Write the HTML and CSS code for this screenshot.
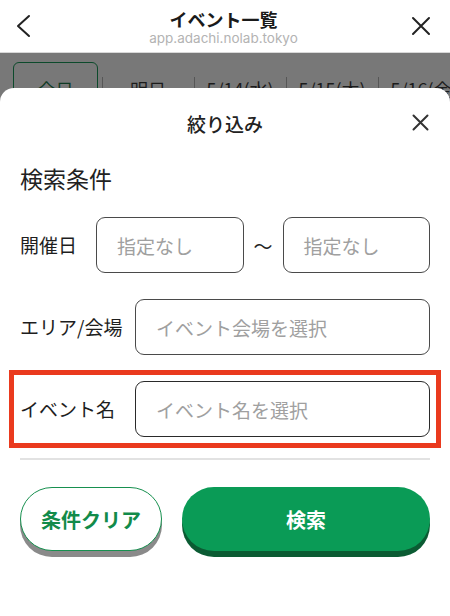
FILE: index.html
```html
<!DOCTYPE html>
<html lang="ja">
<head>
<meta charset="utf-8">
<title>イベント一覧</title>
<link rel="stylesheet" href="styles.css">
</head>
<body>
<div class="screen">
  <header class="appbar">
    <button class="icon-btn appbar__back" aria-label="戻る">
      <svg width="16" height="24" viewBox="0 0 16 24"><polyline points="13,2 2,12 13,22" fill="none" stroke="#222" stroke-width="2" stroke-linecap="round" stroke-linejoin="round"/></svg>
    </button>
    <div class="appbar__titles">
      <div class="appbar__title">イベント一覧</div>
      <div class="appbar__url">app.adachi.nolab.tokyo</div>
    </div>
    <button class="icon-btn appbar__close" aria-label="閉じる">
      <svg width="20" height="20" viewBox="0 0 20 20"><path d="M2 2L18 18M18 2L2 18" fill="none" stroke="#222" stroke-width="2" stroke-linecap="round"/></svg>
    </button>
  </header>

  <nav class="tabs">
    <div class="tab tab--active">全日</div>
    <div class="tab">明日</div>
    <div class="tab">5/14(水)</div>
    <div class="tab">5/15(木)</div>
    <div class="tab">5/16(金)</div>
  </nav>

  <section class="sheet">
    <div class="sheet__head">
      <span></span>
      <h2 class="sheet__title">絞り込み</h2>
      <button class="icon-btn sheet__close" aria-label="閉じる">
        <svg width="17" height="17" viewBox="0 0 17 17"><path d="M1.5 1.5L15.5 15.5M15.5 1.5L1.5 15.5" fill="none" stroke="#333" stroke-width="2" stroke-linecap="round"/></svg>
      </button>
    </div>

    <h3 class="section-title">検索条件</h3>

    <div class="field-row field-row--first">
      <div class="label label--short">開催日</div>
      <div class="input">指定なし</div>
      <div class="tilde">〜</div>
      <div class="input">指定なし</div>
    </div>

    <div class="field-row">
      <div class="label">エリア/会場</div>
      <div class="input">イベント会場を選択</div>
    </div>

    <div class="field-row field-row--highlight">
      <div class="label">イベント名</div>
      <div class="input input--dark">イベント名を選択</div>
    </div>

    <div class="divider"></div>

    <div class="actions">
      <button class="btn btn--clear">条件クリア</button>
      <button class="btn btn--search">検索</button>
    </div>
  </section>
</div>
</body>
</html>
```

FILE: styles.css
```css
* { box-sizing: border-box; }

html, body {
  margin: 0;
  padding: 0;
  background: #fff;
}

body {
  font-family: "Noto Sans CJK JP", "Noto Sans", sans-serif;
  color: #222;
}

.screen {
  position: relative;
  width: 450px;
  height: 616px;
  overflow: hidden;
  display: flex;
  flex-direction: column;
}

.icon-btn {
  border: 0;
  background: none;
  padding: 0;
  margin: 0;
  display: flex;
  align-items: center;
  justify-content: center;
  cursor: pointer;
}

/* ---------- app bar ---------- */
.appbar {
  height: 53px;
  flex: none;
  display: grid;
  grid-template-columns: 1fr auto 1fr;
  align-items: center;
  padding: 0 19px 0 16px;
  background: #fff;
  border-bottom: 1px solid #d8d8d8;
}

.appbar__back { justify-self: start; }
.appbar__close { justify-self: end; }

.appbar__titles {
  align-self: start;
  padding-top: 8px;
  text-align: center;
}

.appbar__title {
  font-size: 18px;
  line-height: 22px;
  font-weight: 700;
  color: #1a1a1a;
}

.appbar__url {
  font-family: Inter, "Liberation Sans", sans-serif;
  font-size: 13.5px;
  line-height: 17px;
  color: #b3b3b3;
}

/* ---------- tabs (dimmed behind sheet) ---------- */
.tabs {
  flex: 1;
  display: flex;
  align-items: flex-start;
  padding: 9px 0 0 13px;
  background: #787878;
}

.tab {
  flex: none;
  width: 92px;
  height: 60px;
  padding-bottom: 6px;
  display: flex;
  align-items: center;
  justify-content: center;
  font-size: 18px;
  color: #1c1c1c;
  white-space: nowrap;
  background: linear-gradient(#565656, #565656) left 15px / 1px 100% no-repeat;
}

.tab--active {
  width: 85px;
  margin-right: 4px;
  border: 1.5px solid #0c4a2b;
  border-radius: 6px;
  background: none;
  color: #0e3a24;
}

/* ---------- bottom sheet ---------- */
.sheet {
  position: absolute;
  top: 88px;
  left: 0;
  right: 0;
  bottom: 0;
  background: #fff;
  border-radius: 14px 14px 0 0;
  padding: 0 20px;
}

.sheet__head {
  height: 72px;
  display: grid;
  grid-template-columns: 1fr auto 1fr;
  align-items: center;
}

.sheet__title {
  margin: 0;
  font-size: 19px;
  font-weight: 500;
  color: #222;
  line-height: 26px;
}

.sheet__close {
  justify-self: end;
  margin-right: 1px;
  margin-top: -4px;
}

.section-title {
  margin: 3px 0 0;
  font-size: 23px;
  line-height: 30px;
  font-weight: 400;
  color: #222;
}

.field-row {
  height: 56px;
  margin-top: 26px;
  display: flex;
  align-items: center;
}

.field-row--first { margin-top: 24px; }

.field-row--highlight {
  outline: 5px solid #ea3a1e;
  outline-offset: 6px;
}

.label {
  flex: none;
  width: 115px;
  font-size: 19px;
  line-height: 26px;
  color: #1e1e1e;
  white-space: nowrap;
}

.label--short { width: 76px; }

.input {
  flex: 1;
  min-width: 0;
  height: 56px;
  display: flex;
  align-items: center;
  padding-left: 20px;
  border: 1px solid #4a4a4a;
  border-radius: 9px;
  font-size: 19px;
  color: #a0a0a0;
  white-space: nowrap;
}

.input--dark { border-color: #2a2a2a; }

.tilde {
  flex: none;
  width: 39px;
  text-align: center;
  font-size: 19px;
  color: #222;
}

.divider {
  height: 2px;
  margin-top: 21px;
  background: #e2e2e2;
}

.actions {
  margin-top: 27px;
  display: flex;
  gap: 20px;
}

.btn {
  height: 64px;
  border-radius: 32px;
  font-family: "Noto Sans CJK JP", sans-serif;
  font-size: 20px;
  font-weight: 700;
  cursor: pointer;
}

.btn--clear {
  flex: none;
  width: 142px;
  background: #fff;
  border: 1.5px solid #17904f;
  color: #128b4a;
  box-shadow: 0 6px 0 #8a8a8a;
}

.btn--search {
  flex: 1;
  background: #0a9b56;
  border: 0;
  color: #fff;
  box-shadow: 0 6px 0 #0b5b33;
}
```
